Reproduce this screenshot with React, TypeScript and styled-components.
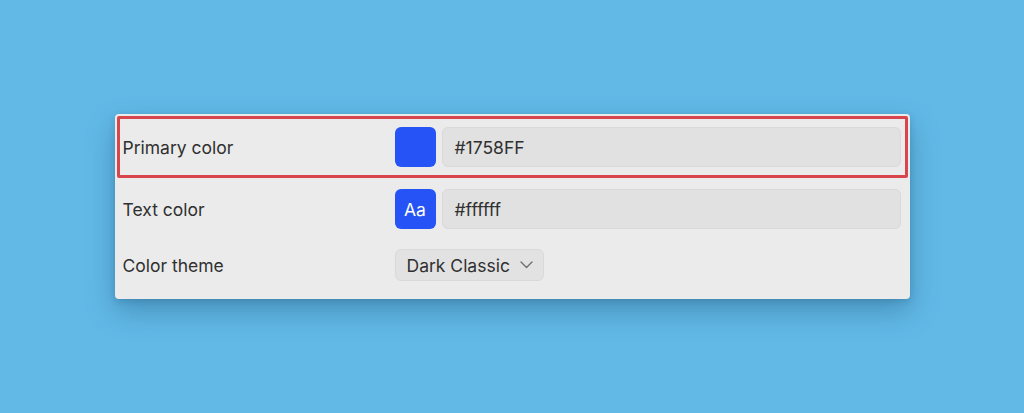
import React from 'react';
import styled, { createGlobalStyle } from 'styled-components';

const GlobalStyle = createGlobalStyle`
  html, body {
    margin: 0;
    padding: 0;
    height: 100%;
  }
  body {
    background: #62b9e6;
    font-family: Inter, "Noto Sans", sans-serif;
    color: #303030;
  }
  #root {
    height: 100%;
  }
`;

const Page = styled.div`
  height: 100vh;
  display: flex;
  align-items: center;
  justify-content: center;
`;

const Panel = styled.div`
  width: 795px;
  box-sizing: border-box;
  padding: 2px 2px 8px;
  background: #ebebeb;
  border-radius: 4px;
  box-shadow: 0 12px 28px rgba(20, 70, 110, 0.35), 0 2px 6px rgba(20, 70, 110, 0.2);
`;

const Row = styled.div<{ $highlight?: boolean; $pad?: string }>`
  display: grid;
  grid-template-columns: 272px 1fr;
  align-items: center;
  padding: ${p => p.$pad ?? '8px 4px 8px 3px'};
  border: 3px solid ${p => (p.$highlight ? '#d9454d' : 'transparent')};
  border-radius: 2px;
`;

const Label = styled.span`
  font-size: 17.5px;
  color: #303030;
`;

const Controls = styled.div`
  display: flex;
  align-items: center;
  gap: 6px;
`;

const Swatch = styled.div<{ $color: string }>`
  width: 41px;
  height: 40px;
  flex: none;
  box-sizing: border-box;
  border-radius: 6px;
  background: ${p => p.$color};
  color: #ffffff;
  font-size: 17.5px;
  display: flex;
  align-items: center;
  justify-content: center;
`;

const HexInput = styled.div`
  flex: 1;
  height: 40px;
  box-sizing: border-box;
  display: flex;
  align-items: center;
  padding: 0 12px;
  background: #e1e1e1;
  border: 1px solid #d9d9d9;
  border-radius: 6px;
  font-size: 17.5px;
  color: #303030;
`;

const Select = styled.div`
  height: 32px;
  box-sizing: border-box;
  display: inline-flex;
  align-items: center;
  gap: 10px;
  padding: 0 10px 0 11px;
  background: #e2e2e2;
  border: 1px solid #d9d9d9;
  border-radius: 6px;
  font-size: 17.5px;
  color: #303030;
`;

const Chevron = () => (
  <svg width="13" height="8" viewBox="0 0 13 8" fill="none">
    <path d="M1 1l5.5 5.5L12 1" stroke="#6b6b6b" strokeWidth="1.3" strokeLinecap="round" strokeLinejoin="round" />
  </svg>
);

export default function App() {
  return (
    <>
      <GlobalStyle />
      <Page>
        <Panel>
          <Row $highlight>
            <Label>Primary color</Label>
            <Controls>
              <Swatch $color="#2653f5" />
              <HexInput>#1758FF</HexInput>
            </Controls>
          </Row>
          <Row $pad="8px 4px 7px 3px">
            <Label>Text color</Label>
            <Controls>
              <Swatch $color="#2653f5">Aa</Swatch>
              <HexInput>#ffffff</HexInput>
            </Controls>
          </Row>
          <Row $pad="7px 4px 7px 3px">
            <Label>Color theme</Label>
            <Controls>
              <Select>
                Dark Classic
                <Chevron />
              </Select>
            </Controls>
          </Row>
        </Panel>
      </Page>
    </>
  );
}
